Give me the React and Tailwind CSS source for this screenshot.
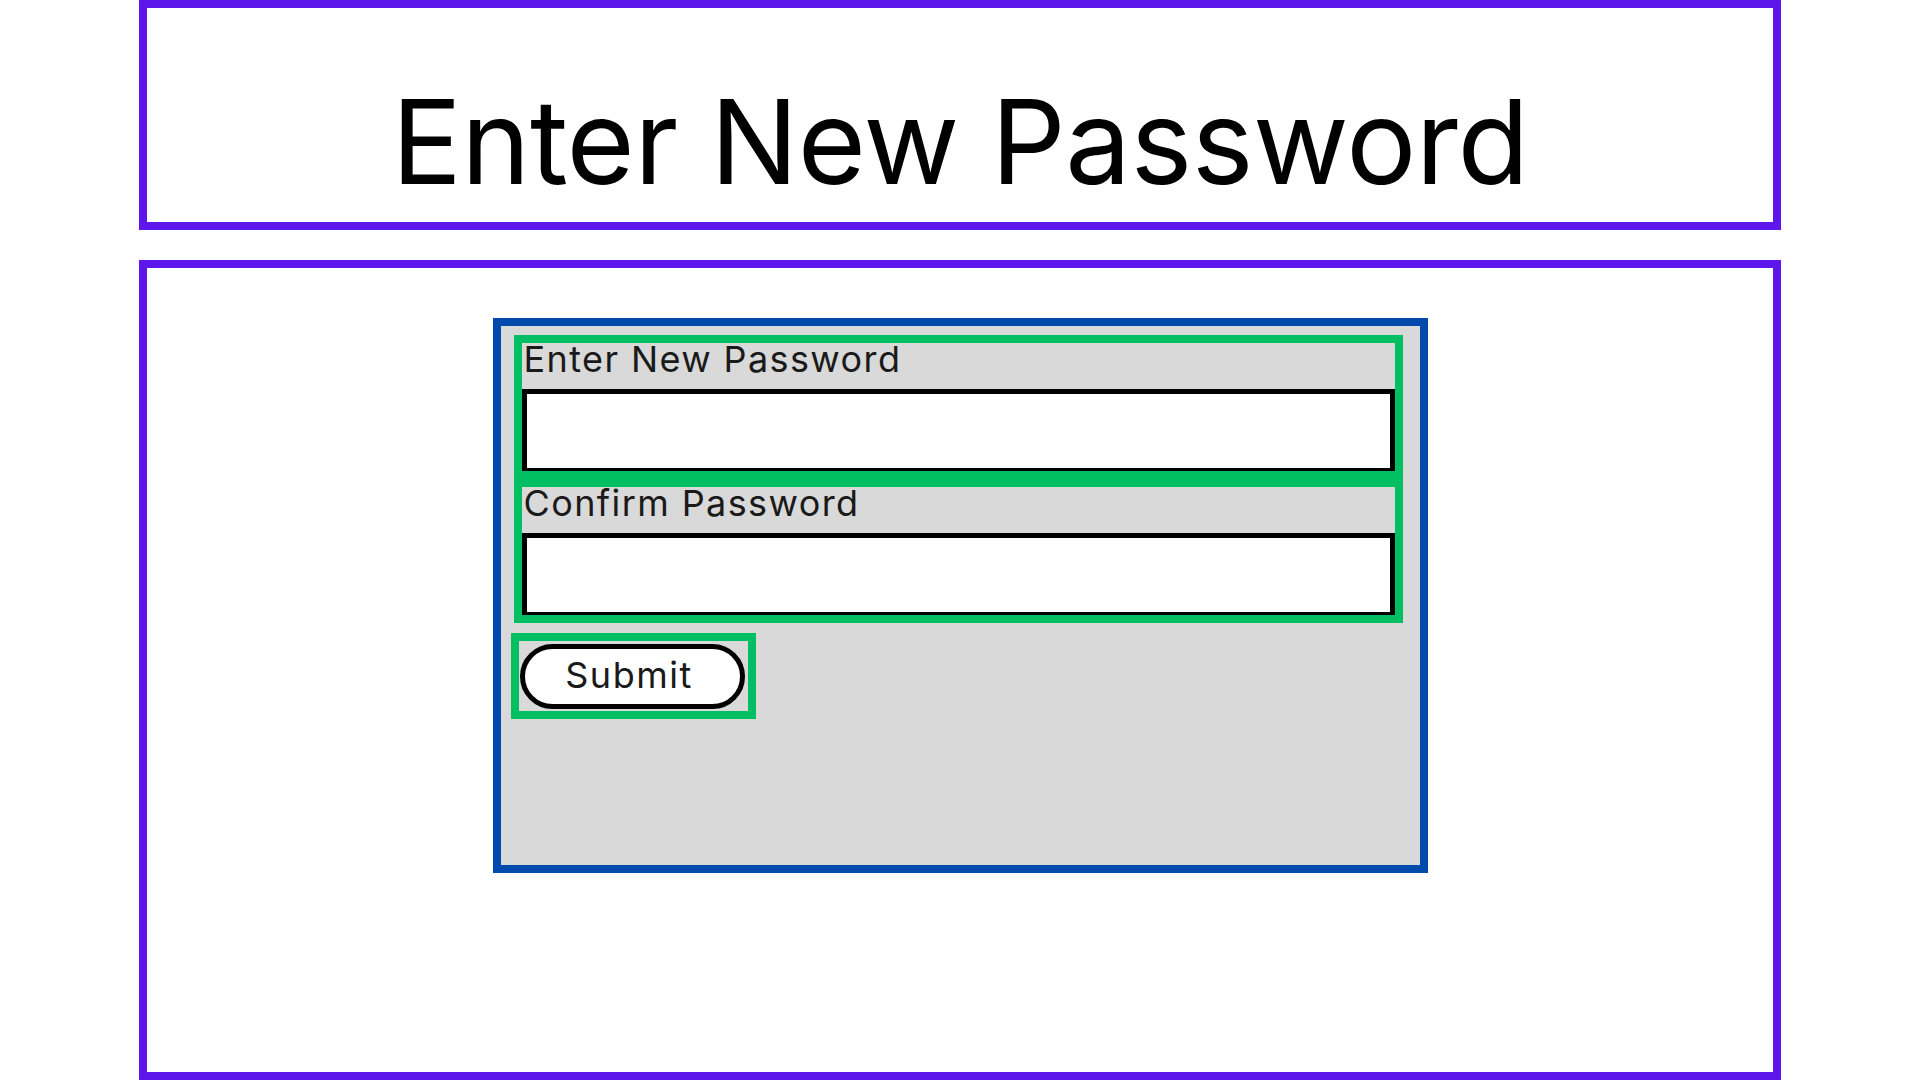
import React from 'react';

function Field({ label }) {
    return (
        <div className="w-[889px] h-[144px] border-8 border-[#00bf63] flex flex-col">
            <label className="h-[46px] pl-[2px] text-[36px] leading-[32px] tracking-[1.4px] text-[#1a1a1a] font-['Inter',sans-serif]">{label}</label>
            <input type="password" className="h-[82px] w-full bg-white border-[5px] border-b-[3px] border-black outline-none" />
        </div>
    );
}

export default function App() {
    return (
        <div className="w-[1920px] h-[1080px] bg-white flex flex-col px-[139px] font-['Inter',sans-serif]">
            {/* HEADER */}
            <div className="h-[230px] border-8 border-[#5e17eb] flex justify-center items-start pt-[64px]">
                <h1 className="text-[117px] leading-[140px] text-black tracking-[-0.5px]">Enter New Password</h1>
            </div>

            {/* BODY */}
            <div className="mt-[30px] h-[820px] border-8 border-[#5e17eb] flex flex-col items-center pt-[50px]">
                <div className="w-[935px] h-[555px] border-8 border-[#004aad] bg-[#d9d9d9] pt-[9px] pl-[13px]">
                    <Field label="Enter New Password" />
                    <Field label="Confirm Password" />
                    <div className="mt-[10px] -ml-[3px] w-[245px] h-[86px] border-8 border-[#00bf63] flex items-center pl-[1px]">
                        <button type="button" className="w-[225px] h-[65px] rounded-full bg-white border-[5px] border-black text-[36px] leading-none tracking-[1.5px] text-[#1a1a1a] pb-[2px] pr-[6px]">
                            Submit
                        </button>
                    </div>
                </div>
            </div>
        </div>
    );
}
